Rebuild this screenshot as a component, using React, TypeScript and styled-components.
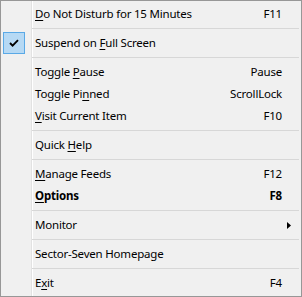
import React from 'react';
import styled, { createGlobalStyle } from 'styled-components';

const Global = createGlobalStyle`
  html, body { margin: 0; padding: 0; background: #ffffff; }
  body { font-family: "Noto Sans", "Open Sans", sans-serif; }
`;

const Menu = styled.div`
  box-sizing: border-box;
  width: 302px;
  height: 297px;
  border: 1px solid #979797;
  background-color: #f0f0f0;
  background-image: linear-gradient(#e2e2e2, #e2e2e2), linear-gradient(#ffffff, #ffffff);
  background-repeat: no-repeat;
  background-size: 1px 100%, 1px 100%;
  background-position: 30px 0, 31px 0;
  padding: 2px;
  display: flex;
  flex-direction: column;
  font-family: "Noto Sans", "Open Sans", sans-serif;
  font-size: 11.5px;
  color: #000000;
`;

const Item = styled.div<{ $bold?: boolean }>`
  height: 22px;
  display: grid;
  grid-template-columns: 22px 1fr auto 17px;
  column-gap: 0;
  align-items: center;
  line-height: 22px;
  font-weight: ${(p) => (p.$bold ? 700 : 400)};
  white-space: nowrap;
`;

const CheckCell = styled.div<{ $checked?: boolean }>`
  box-sizing: border-box;
  width: 22px;
  height: 22px;
  display: flex;
  align-items: center;
  justify-content: center;
  background: ${(p) => (p.$checked ? '#b6d9f4' : 'transparent')};
  border: 1px solid ${(p) => (p.$checked ? '#5aa9e6' : 'transparent')};
`;

const Label = styled.span`
  padding-left: 10px;
  letter-spacing: -0.2px;
`;

const Shortcut = styled.span`
  text-align: right;
  letter-spacing: -0.2px;
`;

const ArrowCell = styled.div`
  display: flex;
  align-items: center;
  padding-left: 5px;
`;

const Key = styled.span`
  text-decoration: underline;
  text-underline-offset: 2px;
`;

const Separator = styled.div`
  height: 7px;
  display: flex;
  align-items: center;
  padding-left: 29px;
  padding-right: 0;
  &::after {
    content: '';
    flex: 1;
    height: 1px;
    background: #d7d7d7;
  }
`;

const Check = () => (
  <svg width="10" height="8" viewBox="0 0 10 8">
    <path d="M1 4 L3.6 6.6 L9 1.2" fill="none" stroke="#000" strokeWidth="1.9" />
  </svg>
);

const Arrow = () => (
  <svg width="4" height="7" viewBox="0 0 4 7">
    <path d="M0 0 L4 3.5 L0 7 Z" fill="#000" />
  </svg>
);

type Entry =
  | { sep: true }
  | {
      sep?: false;
      label: React.ReactNode;
      shortcut?: string;
      checked?: boolean;
      bold?: boolean;
      submenu?: boolean;
    };

const entries: Entry[] = [
  { label: <><Key>D</Key>o Not Disturb for 15 Minutes</>, shortcut: 'F11' },
  { sep: true },
  { label: <>Suspend on <Key>F</Key>ull Screen</>, checked: true },
  { sep: true },
  { label: <>Toggle <Key>P</Key>ause</>, shortcut: 'Pause' },
  { label: <>Toggle Pi<Key>n</Key>ned</>, shortcut: 'ScrollLock' },
  { label: <><Key>V</Key>isit Current Item</>, shortcut: 'F10' },
  { sep: true },
  { label: <>Quick <Key>H</Key>elp</> },
  { sep: true },
  { label: <><Key>M</Key>anage Feeds</>, shortcut: 'F12' },
  { label: <><Key>O</Key>ptions</>, shortcut: 'F8', bold: true },
  { sep: true },
  { label: <>Monitor</>, submenu: true },
  { sep: true },
  { label: <>Sector-Seven Homepage</> },
  { sep: true },
  { label: <>E<Key>x</Key>it</>, shortcut: 'F4' },
];

export default function App() {
  return (
    <>
      <Global />
      <Menu>
        {entries.map((e, i) =>
          e.sep ? (
            <Separator key={i} />
          ) : (
            <Item key={i} $bold={e.bold}>
              <CheckCell $checked={e.checked}>{e.checked && <Check />}</CheckCell>
              <Label>{e.label}</Label>
              <Shortcut>{e.shortcut}</Shortcut>
              <ArrowCell>{e.submenu && <Arrow />}</ArrowCell>
            </Item>
          )
        )}
      </Menu>
    </>
  );
}
